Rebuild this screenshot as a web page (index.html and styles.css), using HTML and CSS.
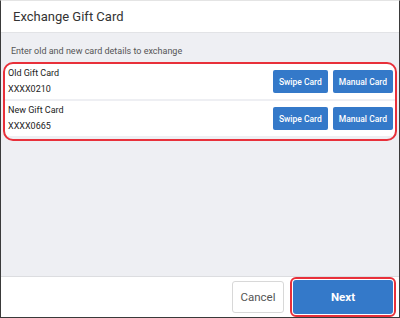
FILE: index.html
```html
<!DOCTYPE html>
<html lang="en">
<head>
    <meta charset="UTF-8">
    <meta name="viewport" content="width=device-width, initial-scale=1.0">
    <title>Exchange Gift Card</title>
    <link rel="stylesheet" href="styles.css">
</head>
<body>
    <div class="dialog">
        <div class="header">Exchange Gift Card</div>
        <div class="content">
            <div class="hint">Enter old and new card details to exchange</div>
            <div class="cards">
                <div class="card-row">
                    <div class="card-info">
                        <div class="card-label">Old Gift Card</div>
                        <div class="card-number">XXXX0210</div>
                    </div>
                    <div class="card-actions">
                        <div class="btn-small">Swipe Card</div>
                        <div class="btn-small">Manual Card</div>
                    </div>
                </div>
                <div class="card-row">
                    <div class="card-info">
                        <div class="card-label">New Gift Card</div>
                        <div class="card-number">XXXX0665</div>
                    </div>
                    <div class="card-actions">
                        <div class="btn-small">Swipe Card</div>
                        <div class="btn-small">Manual Card</div>
                    </div>
                </div>
            </div>
        </div>
        <div class="footer">
            <div class="btn-cancel">Cancel</div>
            <div class="btn-next">Next</div>
        </div>
    </div>
</body>
</html>
```

FILE: styles.css
```css
html, body {
    margin: 0;
    padding: 0;
}
body {
    font-family: Roboto, "Liberation Sans", Arial, sans-serif;
    width: 400px;
    height: 318px;
    box-sizing: border-box;
    border: 1px solid #3a3a3a;
    border-top-color: #e4e4e4;
    background-color: #fff;
    color: #333;
}
.dialog {
    display: flex;
    flex-direction: column;
    height: 100%;
}
.header {
    height: 31px;
    padding-left: 12px;
    display: flex;
    align-items: center;
    font-size: 13px;
    color: #333;
    border-bottom: 1px solid #e2e3e6;
}
.content {
    flex: 1;
    background-color: #eeeff3;
    padding: 0 4px 0 4px;
}
.hint {
    font-size: 9px;
    color: #555;
    padding: 11px 0 0 6px;
    height: 20px;
    line-height: 14px;
}
.cards {
    display: flex;
    flex-direction: column;
    gap: 2px;
    border-radius: 8px;
    outline: 2.5px solid #e8303a;
    outline-offset: 0px;
    padding-bottom: 3px;
}
.card-row {
    height: 35px;
    background-color: #fff;
    display: flex;
    align-items: center;
    justify-content: space-between;
    padding: 0 2px 0 3px;
}
.card-row:first-child {
    border-radius: 6px 6px 0 0;
}
.card-info {
    display: flex;
    flex-direction: column;
    gap: 5px;
    font-size: 9px;
    line-height: 11px;
    color: #222;
}
.card-actions {
    display: flex;
    gap: 5px;
}
.btn-small {
    height: 23px;
    padding: 0 6px;
    display: flex;
    align-items: center;
    background-color: #3479c9;
    color: #fff;
    font-size: 8.5px;
    font-weight: 500;
    border-radius: 2px;
}
.footer {
    height: 40px;
    border-top: 1px solid #dcdde0;
    display: flex;
    justify-content: flex-end;
    align-items: center;
    gap: 9px;
    padding-right: 6px;
}
.btn-cancel {
    width: 50px;
    height: 30px;
    border: 1px solid #d8d8d8;
    border-radius: 3px;
    display: flex;
    align-items: center;
    justify-content: center;
    font-size: 11.5px;
    color: #555;
}
.btn-next {
    width: 100px;
    height: 34px;
    background-color: #3479c9;
    border-radius: 3px;
    display: flex;
    align-items: center;
    justify-content: center;
    font-size: 11.5px;
    font-weight: 700;
    color: #fff;
    outline: 2.5px solid #e8303a;
    outline-offset: 1px;
}
```
